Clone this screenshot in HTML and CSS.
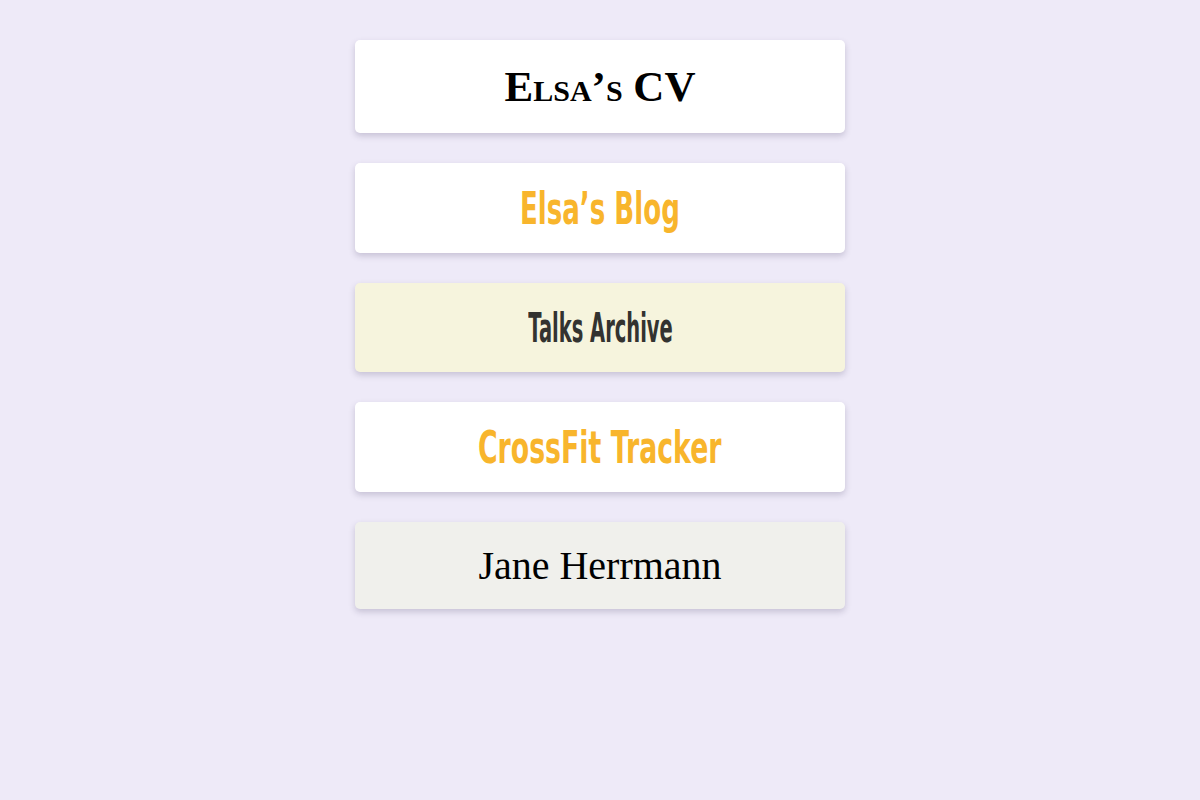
FILE: index.html
```html
<!DOCTYPE html>
<html lang="en">
<head>
<meta charset="utf-8">
<title>Links</title>
<link rel="stylesheet" href="styles.css">
</head>
<body>
<main class="list">
  <a class="card card-cv" href="#"><span class="label">Elsa’s CV</span></a>
  <a class="card card-blog" href="#"><span class="label narrow">Elsa’s Blog</span></a>
  <a class="card card-talks" href="#"><span class="label narrow">Talks Archive</span></a>
  <a class="card card-crossfit" href="#"><span class="label narrow">CrossFit Tracker</span></a>
  <a class="card card-jane" href="#"><span class="label">Jane Herrmann</span></a>
</main>
</body>
</html>
```

FILE: styles.css
```css
html, body {
  margin: 0;
  padding: 0;
}
body {
  background: #eeeaf8;
  min-height: 800px;
}
.list {
  width: 490px;
  margin: 40px auto 0;
  display: flex;
  flex-direction: column;
  gap: 30px;
}
.card {
  display: flex;
  align-items: center;
  justify-content: center;
  background: #ffffff;
  border-radius: 5px;
  box-shadow: 0 3px 6px rgba(60, 50, 90, 0.22);
  text-decoration: none;
}
.label {
  display: inline-block;
  white-space: nowrap;
}
.narrow {
  font-family: "DejaVu Sans", sans-serif;
  font-weight: bold;
}
.card-cv {
  height: 93px;
  font-family: "Liberation Serif", serif;
  font-weight: bold;
  font-variant: small-caps;
  font-size: 43px;
  color: #000;
}
.card-blog {
  height: 90px;
  font-size: 45px;
  color: #f8b52c;
}
.card-blog .label {
  transform: scaleX(0.58);
}
.card-talks {
  height: 89px;
  font-size: 40px;
  color: #333330;
  background: #f6f4dd;
}
.card-talks .label {
  transform: scaleX(0.487);
}
.card-crossfit {
  height: 90px;
  font-size: 45px;
  color: #f8b52c;
}
.card-crossfit .label {
  transform: scaleX(0.595);
}
.card-jane {
  height: 87px;
  font-family: "Liberation Serif", serif;
  font-size: 40px;
  color: #000;
  background: #f0f0ec;
}
```
